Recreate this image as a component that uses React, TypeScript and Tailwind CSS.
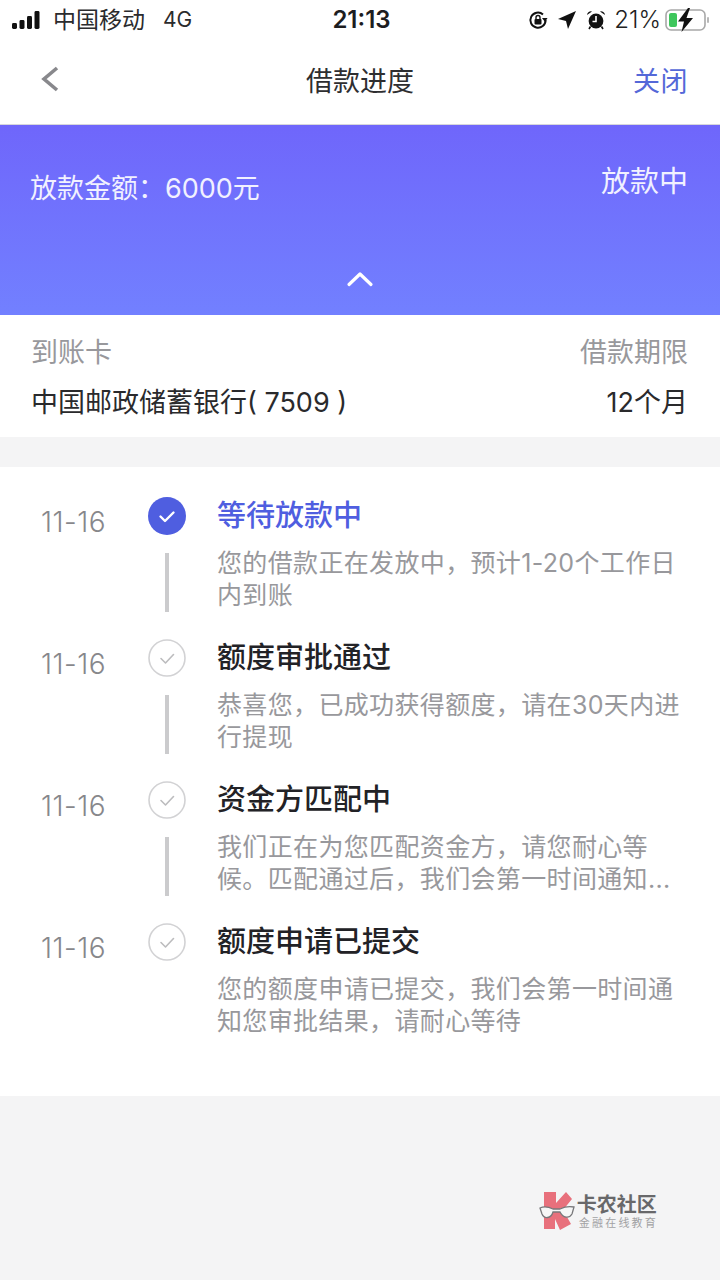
const font = { fontFamily: '"Inter","Noto Sans CJK SC","Noto Sans",sans-serif' };

function Check({ active }: { active?: boolean }) {
  if (active) {
    return (
      <svg width="38" height="38" viewBox="0 0 38 38" className="block">
        <circle cx="19" cy="19" r="19" fill="#4f5ee0" />
        <path d="M12.5 19.5 L17 24 L25.5 15.5" fill="none" stroke="#fff" strokeWidth="2.4" strokeLinecap="round" strokeLinejoin="round" />
      </svg>
    );
  }
  return (
    <svg width="38" height="38" viewBox="0 0 38 38" className="block">
      <circle cx="19" cy="19" r="18" fill="#fff" stroke="#d2d2d4" strokeWidth="1.6" />
      <path d="M13 19.5 L17.5 24 L25.5 15.5" fill="none" stroke="#bcbcbe" strokeWidth="1.6" strokeLinecap="round" strokeLinejoin="round" />
    </svg>
  );
}

function Step({ title, desc, active, last }: { title: string; desc: string[]; active?: boolean; last?: boolean }) {
  return (
    <div className="flex h-[142px]">
      <div className="w-[148px] pl-[41px] pt-[7px] text-[28px] leading-[36px] text-[#87878b] font-light tracking-[0.5px]">11-16</div>
      <div className="w-[38px] flex flex-col items-center">
        <Check active={active} />
        {!last && <div className="mt-[18px] w-[4px] h-[59px] bg-[#cbcbcd]" />}
      </div>
      <div className="ml-[31px] flex-1">
        <div className={`text-[29px] leading-[38px] font-medium ${active ? "text-[#4f5ee0]" : "text-[#222226]"}`}>{title}</div>
        <div className="mt-[12px] text-[25px] leading-[32px] tracking-[0.35px] text-[#98989c] whitespace-nowrap">
          {desc.map((d) => (
            <div key={d}>{d}</div>
          ))}
        </div>
      </div>
    </div>
  );
}

function Logo() {
  return (
    <div className="flex items-start gap-[2px]">
      <svg width="36" height="40" viewBox="0 0 36 40" className="block">
        <path d="M5 1 L17 1 L17 12 L27 1 L33 8 L24 19 L32 33 L21 39 L16 28 L16 38 L5 38 Z" fill="#e8707c" />
        <path d="M1 17 C5 15 10 16 14 18 L21 18 C25 16 30 15 35 16 L33 23 C30 28 24 27 21 21 L14 21 C12 28 5 28 3 23 Z" fill="#f6f6f6" stroke="#77777a" strokeWidth="1.3" />
      </svg>
      <div className="flex flex-col text-[#68686a] pt-[2px]">
        <div className="text-[20px] leading-[24px] font-bold">卡农社区</div>
        <div className="text-[11px] leading-[13px] pl-[2px] tracking-[2.2px] text-[#a2a2a4]">金融在线教育</div>
      </div>
    </div>
  );
}

export default function App() {
  return (
    <div className="w-[720px] h-[1280px] bg-[#f4f4f5] flex flex-col overflow-hidden" style={font}>
      <div className="bg-white h-[125px] border-b border-[#d6d6dc]">
        <div className="h-[40px] flex items-center justify-between pl-[12px] pr-[9px] text-[#1d1d1f]">
          <div className="flex items-center w-[240px]">
            <svg width="33" height="18" viewBox="0 0 33 18" className="block">
              <rect x="0" y="12" width="5" height="6" rx="1.4" fill="#111" />
              <rect x="7.5" y="9" width="5" height="9" rx="1.4" fill="#111" />
              <rect x="15" y="5" width="5" height="13" rx="1.4" fill="#111" />
              <rect x="22.5" y="0" width="5" height="18" rx="1.4" fill="#111" />
            </svg>
            <span className="ml-[8px] text-[23px] leading-[30px] text-[#2b2b2d]">中国移动</span>
            <span className="ml-[18px] text-[21px] leading-[30px] text-[#2b2b2d]">4G</span>
          </div>
          <div className="w-[120px] text-center text-[24px] font-semibold leading-[30px]">21:13</div>
          <div className="w-[240px] flex items-center justify-end">
            <svg width="20" height="20" viewBox="0 0 20 20" className="block mr-[10px]">
              <path d="M17.6 10 A7.6 7.6 0 1 1 15 4.4" fill="none" stroke="#111" strokeWidth="2" />
              <path d="M14 8 L19.5 8 L17 12 Z" fill="#111" />
              <rect x="6.5" y="9" width="7" height="5.5" rx="1" fill="#111" />
              <path d="M8 9 V7.5 A2 2 0 0 1 12 7.5 V9" fill="none" stroke="#111" strokeWidth="1.4" />
            </svg>
            <svg width="18" height="18" viewBox="0 0 18 18" className="block mr-[10px]">
              <path d="M18 0 L10 18 L8 10 L0 8 Z" fill="#111" />
            </svg>
            <svg width="20" height="20" viewBox="0 0 20 20" className="block mr-[8px]">
              <circle cx="10" cy="11" r="7.4" fill="#111" />
              <path d="M1 5 A4 4 0 0 1 6 1.5 Z" fill="#111" />
              <path d="M19 5 A4 4 0 0 0 14 1.5 Z" fill="#111" />
              <path d="M4.5 16.5 L3 19 M15.5 16.5 L17 19" stroke="#111" strokeWidth="1.6" />
              <path d="M10 6 V11.5 H6.5" fill="none" stroke="#fff" strokeWidth="1.6" />
            </svg>
            <span className="text-[24px] leading-[30px] text-[#222] font-light">21%</span>
            <svg width="46" height="24" viewBox="0 0 46 24" className="block ml-[4px]">
              <rect x="1" y="2" width="39" height="20" rx="5" fill="none" stroke="#a8a8a8" strokeWidth="1.6" />
              <rect x="4" y="5" width="8" height="14" rx="2" fill="#3ec65c" />
              <rect x="42" y="9" width="2" height="6" rx="1" fill="#b8b8b8" />
              <path d="M23 0 L13 13.5 H19 L16.5 24 L28 10 H21.5 L25 0 Z" fill="#111" />
            </svg>
          </div>
        </div>
        <div className="h-[84px] flex items-center justify-between pr-[32px] pl-[40px]">
          <svg width="20" height="28" viewBox="0 0 20 28" className="block -mt-[7px]">
            <path d="M17 3 L4 14 L17 25" fill="none" stroke="#88888c" strokeWidth="3.6" />
          </svg>
          <div className="absolute left-0 w-[720px] text-center text-[27px] leading-[40px] text-[#2e2e30] -mt-[1px] pointer-events-none">借款进度</div>
          <div className="text-[27px] leading-[40px] text-[#5468d8] tracking-[0.5px]">关闭</div>
        </div>
      </div>

      <div className="h-[190px] bg-gradient-to-b from-[#6f66fb] to-[#7280ff] flex flex-col text-[#f1f1ff]">
        <div className="flex justify-between pl-[30px] pr-[32px]">
          <div className="pt-[45px] text-[27px] leading-[38px]">放款金额：6000元</div>
          <div className="pt-[38px] text-[29px] leading-[38px]">放款中</div>
        </div>
        <div className="mt-[63px] flex justify-center">
          <svg width="28" height="16" viewBox="0 0 28 16" className="block">
            <path d="M3 13.5 L14 3 L25 13.5" fill="none" stroke="#fff" strokeWidth="3.2" strokeLinecap="round" strokeLinejoin="round" />
          </svg>
        </div>
      </div>

      <div className="bg-white h-[122px] pl-[31px] pr-[32px] pt-[19px] flex flex-col">
        <div className="flex justify-between text-[27px] leading-[38px] text-[#98989c]">
          <span>到账卡</span>
          <span>借款期限</span>
        </div>
        <div className="mt-[12px] flex justify-between text-[27px] leading-[38px] text-[#2a2a2c]">
          <span>中国邮政储蓄银行( 7509 )</span>
          <span>12个月</span>
        </div>
      </div>

      <div className="mt-[30px] bg-white h-[629px] pt-[30px]">
        <Step active title="等待放款中" desc={["您的借款正在发放中，预计1-20个工作日", "内到账"]} />
        <Step title="额度审批通过" desc={["恭喜您，已成功获得额度，请在30天内进", "行提现"]} />
        <Step title="资金方匹配中" desc={["我们正在为您匹配资金方，请您耐心等", "候。匹配通过后，我们会第一时间通知..."]} />
        <Step last title="额度申请已提交" desc={["您的额度申请已提交，我们会第一时间通", "知您审批结果，请耐心等待"]} />
      </div>

      <div className="flex-1 flex justify-end pr-[62px] pt-[95px]">
        <Logo />
      </div>
    </div>
  );
}
